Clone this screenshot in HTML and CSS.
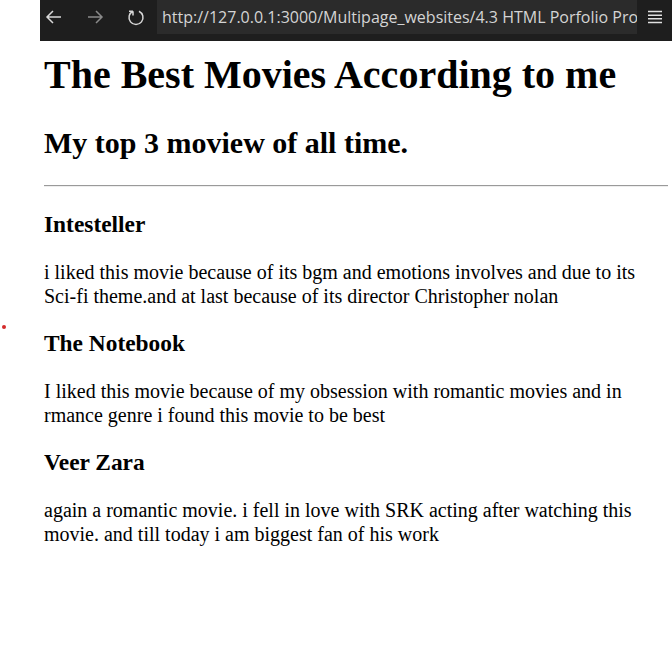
FILE: index.html
```html
<!DOCTYPE html>
<html lang="en">
<head>
<meta charset="utf-8">
<title>Movies</title>
<link rel="stylesheet" href="styles.css">
</head>
<body>
<div class="topbar">
  <div class="gutter"></div>
  <div class="toolbar">
    <div class="nav">
      <svg class="icon" width="18" height="18" viewBox="0 0 18 18"><path d="M16 9H2M8 3L2 9l6 6" fill="none" stroke="#d8d8d8" stroke-width="1.5"/></svg>
      <svg class="icon" width="18" height="18" viewBox="0 0 18 18"><path d="M2 9h14M10 3l6 6-6 6" fill="none" stroke="#8a8a8a" stroke-width="1.5"/></svg>
      <svg class="icon" width="18" height="18" viewBox="0 0 18 18"><path d="M12 3.2A7 7 0 1 1 6 3.2M6 3.2V7.5M6 3.2H2" fill="none" stroke="#d8d8d8" stroke-width="1.5"/></svg>
    </div>
    <div class="url">http://127.0.0.1:3000/Multipage_websites/4.3 HTML Porfolio Pro</div>
    <div class="menu">
      <svg width="16" height="14" viewBox="0 0 16 14"><path d="M1 1.5h14M1 5.2h14M1 8.8h14M1 12.5h14" stroke="#e0e0e0" stroke-width="1.6"/></svg>
    </div>
  </div>
</div>
<span class="dot"></span>
<main class="content">
  <h1 class="title">The Best Movies According to me</h1>
  <h2 class="subtitle">My top 3 moview of all time.</h2>
  <hr class="rule">
  <h3 class="movie">Intesteller</h3>
  <p class="desc">i liked this movie because of its bgm and emotions involves and due to its Sci-fi theme.and at last because of its director Christopher nolan</p>
  <h3 class="movie">The Notebook</h3>
  <p class="desc">I liked this movie because of my obsession with romantic movies and in rmance genre i found this movie to be best</p>
  <h3 class="movie">Veer Zara</h3>
  <p class="desc">again a romantic movie. i fell in love with SRK acting after watching this movie. and till today i am biggest fan of his work</p>
</main>
</body>
</html>
```
FILE: styles.css
```css
html, body {
  margin: 0;
  padding: 0;
  background: #ffffff;
}
body {
  position: relative;
  width: 672px;
  height: 647px;
  overflow: hidden;
  font-family: "Liberation Serif", "Times New Roman", serif;
  color: #000;
}
.topbar {
  display: flex;
  height: 41px;
}
.gutter {
  width: 40px;
  background: #fff;
}
.toolbar {
  flex: 1;
  display: flex;
  align-items: flex-start;
  background: #1e1e1e;
  min-width: 0;
}
.nav {
  display: flex;
  align-items: center;
  gap: 23px;
  height: 34px;
  padding-left: 5px;
  width: 117px;
  box-sizing: border-box;
}
.url {
  width: 480px;
  height: 34px;
  background: #2b2b2b;
  color: #d4d4d4;
  font-family: "Open Sans", "Noto Sans", sans-serif;
  font-size: 16px;
  line-height: 34px;
  padding-left: 5px;
  box-sizing: border-box;
  white-space: nowrap;
  overflow: hidden;
}
.menu {
  flex: 1;
  display: flex;
  justify-content: center;
  align-items: center;
  height: 34px;
}
.dot {
  position: absolute;
  left: 2px;
  top: 325px;
  width: 4px;
  height: 4px;
  border-radius: 50%;
  background: #d42b2b;
}
.content {
  padding: 0 4px 0 44px;
  width: 624px;
}
.title {
  font-size: 40px;
  line-height: 46px;
  margin: 11px 0 0;
  white-space: nowrap;
}
.subtitle {
  font-size: 30px;
  line-height: 34px;
  margin: 28px 0 25px;
}
.rule {
  border: 0;
  border-top: 1px solid #9a9a9a;
  border-bottom: 1px solid #eeeeee;
  margin: 0 0 24px;
  height: 0;
}
.movie {
  font-size: 23.4px;
  line-height: 27px;
  margin: 22px 0 22px;
}
.desc {
  font-size: 20px;
  line-height: 24px;
  margin: 0;
}
```
